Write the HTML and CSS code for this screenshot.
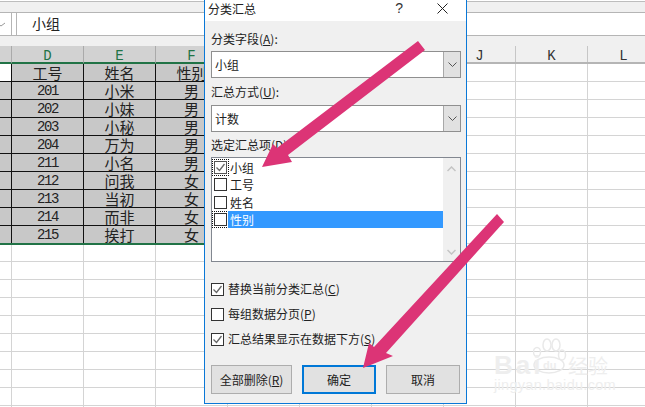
FILE: index.html
```html
<!DOCTYPE html>
<html lang="zh-CN">
<head>
<meta charset="utf-8">
<title>分类汇总</title>
<link rel="stylesheet" href="styles.css">
</head>
<body>
<div class="app">
  <div class="ribbon-edge"></div>
  <div class="formula-bar">
    <div class="name-box"><svg width="6" height="5" viewBox="0 0 6 5"><path d="M-3 1l4 3 4-3" stroke="#999" fill="none"/></svg></div>
    <div class="formula-box">小组</div>
  </div>
  <div class="col-heads">
    <div class="col-head stub selected"></div>
    <div class="col-head selected">D</div>
    <div class="col-head selected">E</div>
    <div class="col-head selected">F</div>
    <div class="col-head">G</div>
    <div class="col-head">H</div>
    <div class="col-head">I</div>
    <div class="col-head">J</div>
    <div class="col-head">K</div>
    <div class="col-head">L</div>
  </div>
  <div class="sheet">
    <div class="row data head-row"><div class="cell stub blank"></div><div class="cell">工号</div><div class="cell">姓名</div><div class="cell">性别</div></div>
    <div class="row data"><div class="cell stub"></div><div class="cell num">201</div><div class="cell">小米</div><div class="cell">男</div></div>
    <div class="row data"><div class="cell stub"></div><div class="cell num">202</div><div class="cell">小妹</div><div class="cell">男</div></div>
    <div class="row data"><div class="cell stub"></div><div class="cell num">203</div><div class="cell">小秘</div><div class="cell">男</div></div>
    <div class="row data"><div class="cell stub"></div><div class="cell num">204</div><div class="cell">万为</div><div class="cell">男</div></div>
    <div class="row data"><div class="cell stub"></div><div class="cell num">211</div><div class="cell">小名</div><div class="cell">男</div></div>
    <div class="row data"><div class="cell stub"></div><div class="cell num">212</div><div class="cell">问我</div><div class="cell">女</div></div>
    <div class="row data"><div class="cell stub"></div><div class="cell num">213</div><div class="cell">当初</div><div class="cell">女</div></div>
    <div class="row data"><div class="cell stub"></div><div class="cell num">214</div><div class="cell">而非</div><div class="cell">女</div></div>
    <div class="row data last"><div class="cell stub"></div><div class="cell num">215</div><div class="cell">挨打</div><div class="cell">女</div></div>
  </div>
</div>

<section class="dialog">
  <header class="title-bar">
    <span class="title">分类汇总</span>
    <span class="help">?</span>
    <svg class="close" width="11" height="11" viewBox="0 0 11 11"><path d="M.5.5l10 10M10.500.5l-10 10" stroke="#222" fill="none"/></svg>
  </header>
  <div class="dialog-body">
    <label class="field-label first">分类字段(<u>A</u>):</label>
    <div class="select"><span class="select-value">小组</span><span class="select-btn"><svg width="9" height="5" viewBox="0 0 9 5"><path d="M.5.5l4 4 4-4" stroke="#555" fill="none"/></svg></span></div>
    <label class="field-label second">汇总方式(<u>U</u>):</label>
    <div class="select"><span class="select-value">计数</span><span class="select-btn"><svg width="9" height="5" viewBox="0 0 9 5"><path d="M.5.5l4 4 4-4" stroke="#555" fill="none"/></svg></span></div>
    <label class="field-label third">选定汇总项(<u>D</u>):</label>
    <div class="listbox">
      <div class="list-items">
        <div class="list-item focus"><span class="box checked"><svg width="11" height="11" viewBox="0 0 11 11"><path d="M1.500 5.500l3 3 5-6.500" stroke="#666" stroke-width="1.300" fill="none"/></svg></span><span class="item-text">小组</span></div>
        <div class="list-item"><span class="box"></span><span class="item-text">工号</span></div>
        <div class="list-item"><span class="box"></span><span class="item-text">姓名</span></div>
        <div class="list-item focus"><span class="box"></span><span class="item-text selected-item">性别</span></div>
      </div>
      <div class="scrollbar">
        <svg width="9" height="6" viewBox="0 0 9 6"><path d="M.5 5l4-4 4 4" stroke="#c4c4c4" stroke-width="1.500" fill="none"/></svg>
        <svg width="9" height="6" viewBox="0 0 9 6"><path d="M.5 1l4 4 4-4" stroke="#c4c4c4" stroke-width="1.500" fill="none"/></svg>
      </div>
    </div>
    <div class="options">
      <div class="option"><span class="box"><svg width="11" height="11" viewBox="0 0 11 11"><path d="M1.500 5.500l3 3 5-6.500" stroke="#666" stroke-width="1.300" fill="none"/></svg></span><span>替换当前分类汇总(<u>C</u>)</span></div>
      <div class="option"><span class="box"></span><span>每组数据分页(<u>P</u>)</span></div>
      <div class="option"><span class="box"><svg width="11" height="11" viewBox="0 0 11 11"><path d="M1.500 5.500l3 3 5-6.500" stroke="#666" stroke-width="1.300" fill="none"/></svg></span><span>汇总结果显示在数据下方(<u>S</u>)</span></div>
    </div>
    <div class="buttons">
      <button class="btn wide" type="button">全部删除(<u>R</u>)</button>
      <button class="btn primary" type="button">确定</button>
      <button class="btn" type="button">取消</button>
    </div>
  </div>
</section>

<svg class="arrows" width="645" height="407" viewBox="0 0 645 407">
  <path d="M418 41 L425 50 L288 155 L292 162 L262 167 L273 144 L277 148 Z" fill="#dc3476"/>
  <path d="M497 214 L504 222 L386 353 L393 356 L363 368 L369 343 L374 347 Z" fill="#dc3476"/>
</svg>

<div class="watermark">
  <svg class="paw" width="36" height="37" viewBox="0 0 36 37"><g fill="none" stroke="#e9e9e9" stroke-width="1.500"><ellipse cx="14" cy="8" rx="4" ry="6"/><ellipse cx="23" cy="8" rx="4" ry="6"/><ellipse cx="4" cy="15" rx="3.500" ry="4.500"/><ellipse cx="29" cy="18" rx="3.500" ry="5"/><ellipse cx="16" cy="28" rx="15" ry="8"/></g></svg>
  <span class="wm-bai">Bai</span><span class="wm-du">du</span><span class="wm-cn">经验</span>
  <span class="wm-url">jingyan.baidu.com</span>
</div>
</body>
</html>
```
FILE: styles.css
```css
* { box-sizing: border-box; }
html, body { margin: 0; padding: 0; }
body {
  width: 645px;
  height: 407px;
  overflow: hidden;
  position: relative;
  background: #fff;
  font-family: "Noto Sans CJK SC", sans-serif;
  color: #222;
}
.app { width: 645px; height: 407px; overflow: hidden; background: #fff; }
.ribbon-edge { height: 12px; background: #f0f0f0; border-top: 1px solid #bdbdbd; border-bottom: 1px solid #b5b5b5; margin-top: 1px; }
.formula-bar {
  display: flex;
  gap: 4px;
  height: 23px;
  background: #fff;
  border-bottom: 1px solid #b5b5b5;
}
.name-box { width: 12px; border-right: 1px solid #b5b5b5; padding-top: 9px; }
.name-box svg { display: block; }
.formula-box { flex: 1; border-left: 1px solid #b5b5b5; padding-left: 15px; font-size: 14px; line-height: 20px; }
.col-heads {
  display: flex;
  height: 28px;
  padding-top: 10px;
  background: #f0f0f0;
  border-bottom: 2px solid #b5b5b5;
}
.col-head {
  width: 72px;
  flex: none;
  text-align: center;
  font: 14px/14px "Liberation Mono", monospace;
  padding-top: 3px;
  border-right: 1px solid #c6c6c6;
  color: #333;
}
.col-head.stub { width: 12px; }
.col-head.selected {
  background: #d2d2d2;
  color: #217346;
  border-right-color: #aaa;
  border-bottom: 2px solid #217346;
  margin-bottom: -2px;
}
.sheet {
  height: 343px;
  background-color: #fff;
  background-image:
    linear-gradient(#d4d4d4 1px, transparent 1px),
    linear-gradient(90deg, #d4d4d4 1px, transparent 1px);
  background-size: 72px 18px;
  background-position: 11px 17px;
}
.row { display: flex; height: 18px; }
.data { width: 228px; background: #c8c8c8; border-bottom: 1px solid #111; }
.data.last { border-bottom: 2px solid #217346; height: 19px; }
.cell {
  width: 72px;
  flex: none;
  border-right: 1px solid #111;
  text-align: center;
  font-size: 15px;
  line-height: 17px;
  color: #222;
  white-space: nowrap;
}
.cell.stub { width: 12px; }
.cell.blank { background: #fff; }
.cell.num {
  font-family: "Liberation Mono", monospace;
  font-size: 14px;
  letter-spacing: -1.400px;
  line-height: 19px;
}

.dialog {
  position: absolute;
  left: 204px;
  top: -1px;
  width: 263px;
  height: 405px;
  background: #f0f0f0;
  border: 1px solid #0a78d7;
  display: flex;
  flex-direction: column;
}
.title-bar {
  height: 21px;
  background: #fff;
  display: flex;
  align-items: center;
  padding: 0 0 5px 3px;
  font-size: 12px;
  flex: none;
}
.title { flex: 1; }
.help { font: 14px "Liberation Sans", sans-serif; margin-right: 34px; color: #333; }
.close { margin-right: 18px; }
.dialog-body { flex: 1; padding: 0 6px; font-size: 12px; display: flex; flex-direction: column; }
.field-label { display: block; line-height: 17px; height: 17px; }
.field-label.first { margin-top: 9px; margin-bottom: 4px; }
.field-label.second { margin-top: 5px; margin-bottom: 5px; }
.field-label.third { margin-top: 4px; margin-bottom: 4px; }
.select {
  height: 27px;
  background: #fff;
  border: 1px solid #8f8f8f;
  display: flex;
  align-items: center;
  justify-content: space-between;
  width: 250px;
}
.select-value { padding-left: 3px; font-size: 12px; }
.select-btn {
  width: 17px;
  height: 25px;
  background: #e1e1e1;
  border-left: 1px solid #a8a8a8;
  display: flex;
  align-items: center;
  justify-content: center;
}
.listbox {
  width: 250px;
  height: 105px;
  border: 1px solid #828790;
  background: #fff;
  display: flex;
  justify-content: space-between;
}
.list-items { padding: 1px 0 0 1px; flex: 1; }
.list-item { display: flex; align-items: center; height: 17.300px; padding-left: 1px; }
.box {
  width: 13px;
  height: 13px;
  flex: none;
  border: 1px solid #333;
  background: #fff;
  display: inline-flex;
  align-items: center;
  justify-content: center;
}
.box.checked { border-color: #555; }
.list-item.focus .box { outline: 1px dotted #111; outline-offset: 1px; }
.item-text { margin-left: 1px; padding-left: 2px; font-size: 12px; line-height: 17px; flex: 1; height: 17px; }
.selected-item { background: #3399ff; color: #fff; }
.scrollbar {
  width: 17px;
  background: #f0f0f0;
  display: flex;
  flex-direction: column;
  justify-content: space-between;
  align-items: center;
  padding: 8px 0 6px;
}
.options { display: flex; flex-direction: column; margin-top: 20px; gap: 11px; }
.option { display: flex; align-items: center; gap: 4px; height: 14px; font-size: 12px; line-height: 14px; white-space: nowrap; }
.buttons { display: flex; margin-top: 19px; }
.btn {
  width: 74px;
  height: 29px;
  font: 12px "Noto Sans CJK SC", sans-serif;
  background: #e1e1e1;
  border: 1px solid #adadad;
  color: #222;
  padding: 0;
  margin-left: 10px;
}
.btn.wide { width: 81px; margin-left: 0; }
.btn.primary { border: 2px solid #0078d7; }

.arrows { position: absolute; left: 0; top: 0; }
.watermark {
  position: absolute;
  left: 494px;
  top: 335px;
  width: 120px;
  height: 60px;
  color: #eeeeee;
  font-family: "Liberation Sans", sans-serif;
}
.paw { position: absolute; left: 39px; top: 2px; }
.wm-bai { position: absolute; left: 0; top: 17px; font-size: 26px; font-weight: 700; line-height: 26px; letter-spacing: 3px; }
.wm-du { position: absolute; left: 49px; top: 23px; font-size: 11px; font-weight: 700; line-height: 14px; }
.wm-cn { position: absolute; left: 74px; top: 19px; font-size: 20px; line-height: 24px; font-family: "Noto Sans CJK SC", sans-serif; }
.wm-url { position: absolute; left: 0; top: 42px; font-size: 14.500px; line-height: 16px; white-space: nowrap; letter-spacing: .3px; }
```
